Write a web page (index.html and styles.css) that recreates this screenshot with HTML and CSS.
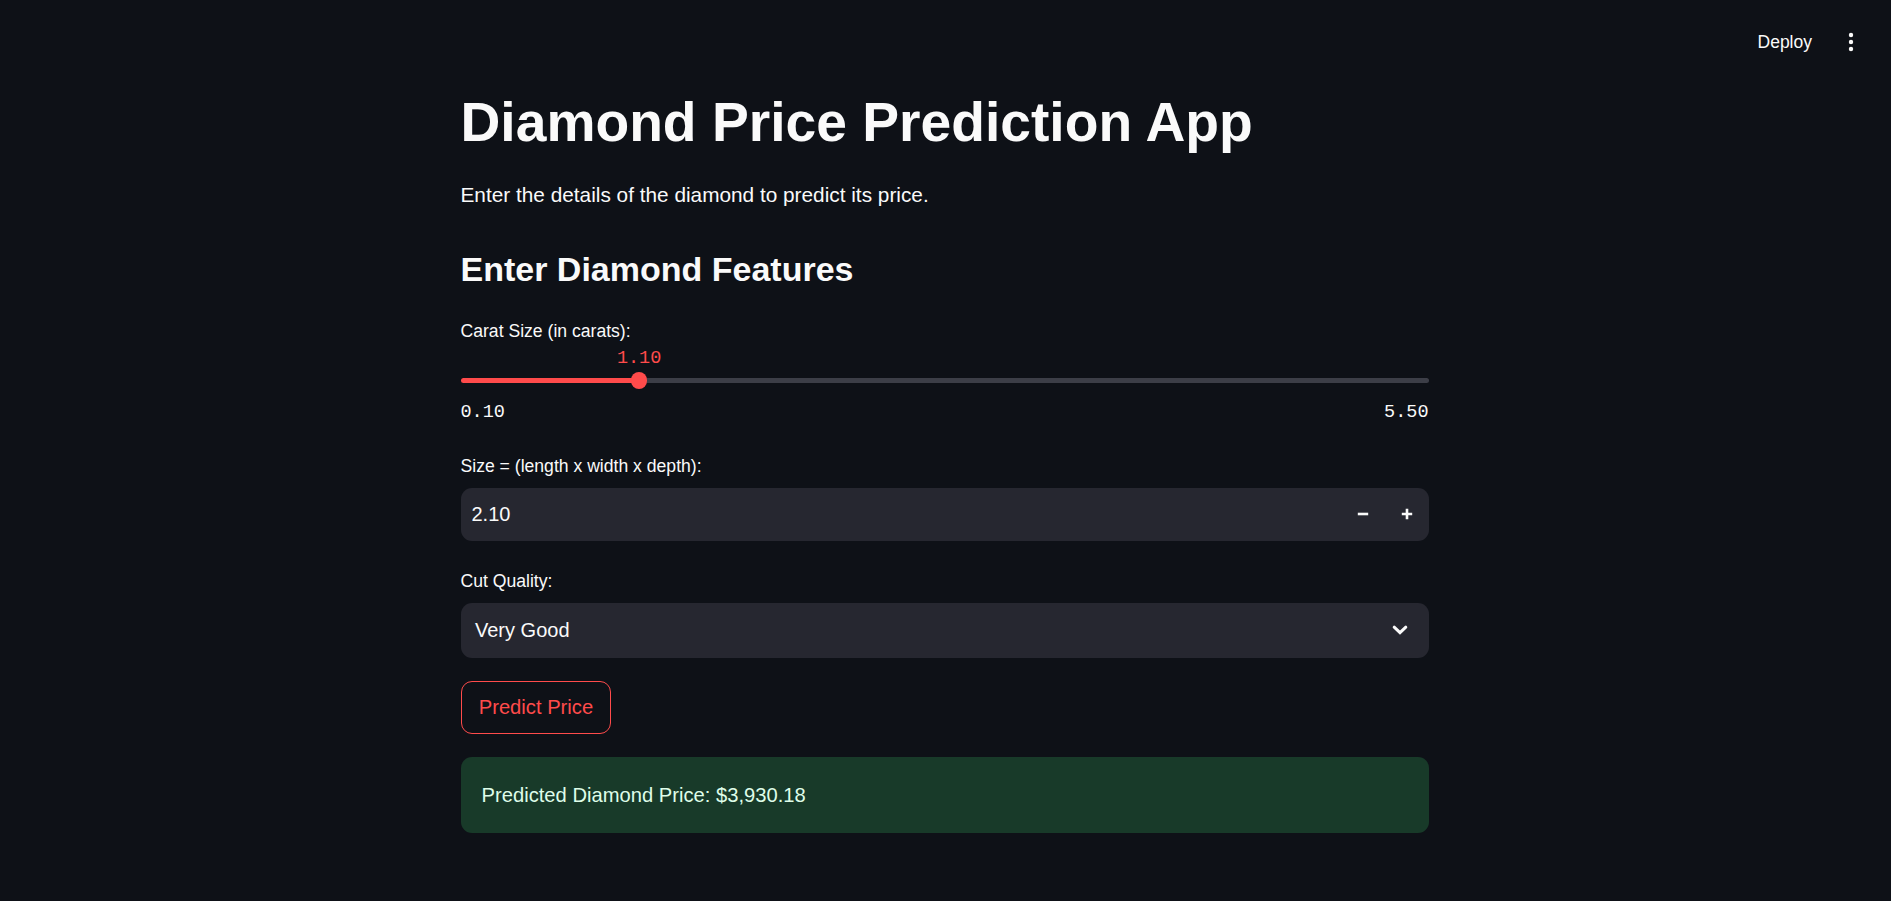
FILE: index.html
```html
<!DOCTYPE html>
<html lang="en">
<head>
<meta charset="utf-8">
<title>Diamond Price Prediction App</title>
<link rel="stylesheet" href="styles.css">
</head>
<body>
<header class="topbar">
  <span class="deploy">Deploy</span>
  <svg class="menu" width="24" height="24" viewBox="0 0 24 24" aria-hidden="true">
    <circle cx="12" cy="5" r="2.2"/>
    <circle cx="12" cy="12" r="2.2"/>
    <circle cx="12" cy="19" r="2.2"/>
  </svg>
</header>

<main class="main">
  <h1 class="title">Diamond Price Prediction App</h1>
  <p class="intro">Enter the details of the diamond to predict its price.</p>
  <h3 class="subheader">Enter Diamond Features</h3>

  <section class="field">
    <label class="label label-carat">Carat Size (in carats):</label>
    <div class="slider">
      <div class="slider-value-row">
        <span class="slider-spacer" style="width:18.45%"></span>
        <span class="slider-value">1.10</span>
      </div>
      <div class="track">
        <span class="track-fill" style="width:18.45%"></span>
        <span class="thumb"></span>
        <span class="track-rest"></span>
      </div>
      <div class="slider-range">
        <span>0.10</span>
        <span>5.50</span>
      </div>
    </div>
  </section>

  <section class="field">
    <label class="label label-size">Size = (length x width x depth):</label>
    <div class="numinput">
      <span class="numval">2.10</span>
      <span class="stepbtn">
        <svg width="12" height="12" viewBox="0 0 12 12" aria-hidden="true"><path d="M0.8 6H11.2"/></svg>
      </span>
      <span class="stepbtn">
        <svg width="12" height="12" viewBox="0 0 12 12" aria-hidden="true"><path d="M0.8 6H11.2M6 0.8V11.2"/></svg>
      </span>
    </div>
  </section>

  <section class="field">
    <label class="label label-cut">Cut Quality:</label>
    <div class="select">
      <span class="select-val">Very Good</span>
      <svg class="chevron" width="16" height="10" viewBox="0 0 16 10" aria-hidden="true"><path d="M2.2 2.2L8 7.6L13.8 2.2"/></svg>
    </div>
  </section>

  <button class="predict">Predict Price</button>

  <div class="success">Predicted Diamond Price: $3,930.18</div>
</main>
</body>
</html>
```

FILE: styles.css
```css
* { box-sizing: border-box; }

html, body {
  margin: 0;
  padding: 0;
  background: #0e1117;
  color: #fafafa;
  font-family: "Liberation Sans", Arial, sans-serif;
}

body {
  min-height: 901px;
  overflow: hidden;
}

.topbar {
  height: 84px;
  display: flex;
  justify-content: flex-end;
  align-items: center;
  gap: 27px;
  padding-right: 28px;
}

.deploy {
  font-size: 17.5px;
  line-height: 24px;
  color: #fafafa;
}

.menu {
  display: block;
  fill: #fafafa;
}

.main {
  width: 968px;
  margin-left: calc(50% - 485px);
  display: flex;
  flex-direction: column;
  align-items: flex-start;
}

.main > * { width: 100%; }

.title {
  margin: 5px 0 0;
  font-size: 55.2px;
  line-height: 66px;
  font-weight: 700;
}

.intro {
  margin: 25px 0 0;
  font-size: 20.8px;
  line-height: 30px;
}

.subheader {
  margin: 37px 0 0;
  font-size: 34px;
  line-height: 44px;
  font-weight: 700;
}

.field {
  display: flex;
  flex-direction: column;
}

.label {
  display: block;
  font-size: 17.6px;
  line-height: 24px;
}

.label-carat { margin-top: 27.5px; }
.label-size { margin-top: 29.6px; }
.label-cut { margin-top: 28.6px; }

.slider {
  display: flex;
  flex-direction: column;
  font-family: "Liberation Mono", "DejaVu Sans Mono", monospace;
  font-size: 18.5px;
}

.slider-value-row {
  margin-top: 5.5px;
  height: 22px;
  line-height: 22px;
  display: flex;
}

.slider-spacer { flex: none; }

.slider-value {
  color: #ff4b4b;
  transform: translateX(-50%);
}

.track {
  margin-top: 2.25px;
  height: 16.5px;
  display: flex;
  align-items: center;
}

.track-fill {
  flex: none;
  height: 5.5px;
  background: #ff4b4b;
  border-radius: 3px 0 0 3px;
}

.thumb {
  flex: none;
  width: 16.5px;
  height: 16.5px;
  margin: 0 -8.25px;
  border-radius: 50%;
  background: #ff4b4b;
  position: relative;
  z-index: 1;
}

.track-rest {
  flex: 1;
  height: 5.5px;
  background: #3c3e47;
  border-radius: 0 3px 3px 0;
}

.slider-range {
  margin-top: 13.3px;
  line-height: 22px;
  display: flex;
  justify-content: space-between;
  color: #fafafa;
}

.numinput {
  margin-top: 10px;
  height: 53px;
  display: flex;
  align-items: center;
  background: #262730;
  border-radius: 11px;
}

.numval {
  flex: 1;
  padding-left: 11px;
  font-size: 20px;
  line-height: 30px;
}

.stepbtn {
  width: 44px;
  height: 100%;
  display: flex;
  align-items: center;
  justify-content: center;
}

.stepbtn svg {
  display: block;
  stroke: #fafafa;
  stroke-width: 2.6;
  fill: none;
}

.select {
  margin-top: 10px;
  height: 54.4px;
  display: flex;
  align-items: center;
  justify-content: space-between;
  padding: 0 21px 0 14.5px;
  background: #262730;
  border-radius: 11px;
}

.select-val {
  font-size: 20px;
  line-height: 30px;
}

.chevron {
  display: block;
  stroke: #fafafa;
  stroke-width: 3;
  fill: none;
  stroke-linecap: round;
}

.predict {
  width: auto;
  margin-top: 23px;
  height: 53.6px;
  padding: 0 17.2px;
  background: transparent;
  border: 1px solid #ff4b4b;
  border-radius: 11px;
  color: #ff4b4b;
  font-family: "Liberation Sans", Arial, sans-serif;
  font-size: 20.2px;
  line-height: 30px;
  cursor: pointer;
}

.success {
  margin-top: 23px;
  height: 76px;
  display: flex;
  align-items: center;
  padding-left: 21px;
  background: #183a29;
  border-radius: 11px;
  color: #dffde9;
  font-size: 20.2px;
  line-height: 30px;
}
```
